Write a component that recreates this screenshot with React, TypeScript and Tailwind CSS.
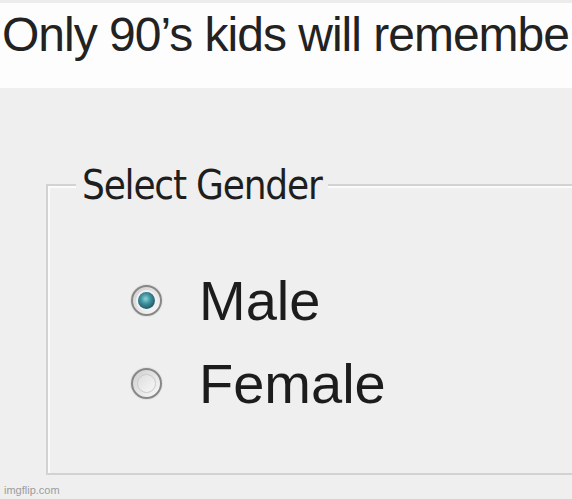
import React from "react";

type RadioProps = {
  label: string;
  checked?: boolean;
};

// old Windows-style radio button with a glossy teal dot
const Radio = ({ label, checked }: RadioProps) => {
  return (
    <div className="h-[83px] flex items-center">
      <span className="ml-[83px] w-[31px] h-[31px] rounded-full border-2 border-[#878787] bg-[linear-gradient(135deg,#cfcfcf,#fafafa)] flex items-center justify-center shadow-[0_0_0_1px_#e2e2e2]">
        {checked ? (
          <span className="w-[17px] h-[17px] rounded-full bg-[radial-gradient(circle_at_45%_40%,#8fd2d4_0%,#3f93a0_35%,#1d4f60_80%)] shadow-[0_0_0_2px_#f2f2f2]" />
        ) : (
          <span className="w-[19px] h-[19px] rounded-full border border-[#cbcbcb] bg-[linear-gradient(135deg,#dedede,#f7f7f7)]" />
        )}
      </span>
      <span className="ml-[37px] text-[56px] leading-[83px] text-[#1c1c1c]">
        {label}
      </span>
    </div>
  );
};

const App = () => {
  return (
    <div className="relative w-[572px] h-[499px] overflow-hidden bg-[#efefef] flex flex-col font-['Liberation_Sans',Arial,sans-serif]">
      <div className="h-[88px] shrink-0 bg-[#fdfdfd] border-t-[3px] border-[#ececec] pl-[2px] pt-[8px]">
        <p className="text-[48px] leading-none whitespace-nowrap tracking-[-1px] text-[#222]">
          Only 90’s kids will remembe
        </p>
      </div>

      <div className="pl-[46px] pt-[77px] mr-[-40px]">
        <fieldset className="border-2 border-[#d2d2d2] shadow-[inset_2px_2px_0_#fbfbfb] h-[310px] p-0">
          <legend className="ml-[28px] px-[6px] bg-[#efefef] text-[40px] leading-none text-[#1e1e1e] font-['DejaVu_Sans_Condensed','DejaVu_Sans',sans-serif] tracking-[-1.2px]">
            Select Gender
          </legend>
          <div className="mt-[54px] flex flex-col">
            <Radio label="Male" checked />
            <Radio label="Female" />
          </div>
        </fieldset>
      </div>

      <span className="absolute left-[4px] bottom-[3px] text-[11px] leading-none text-[#9c9c9c]">
        imgflip.com
      </span>
    </div>
  );
};

export default App;
